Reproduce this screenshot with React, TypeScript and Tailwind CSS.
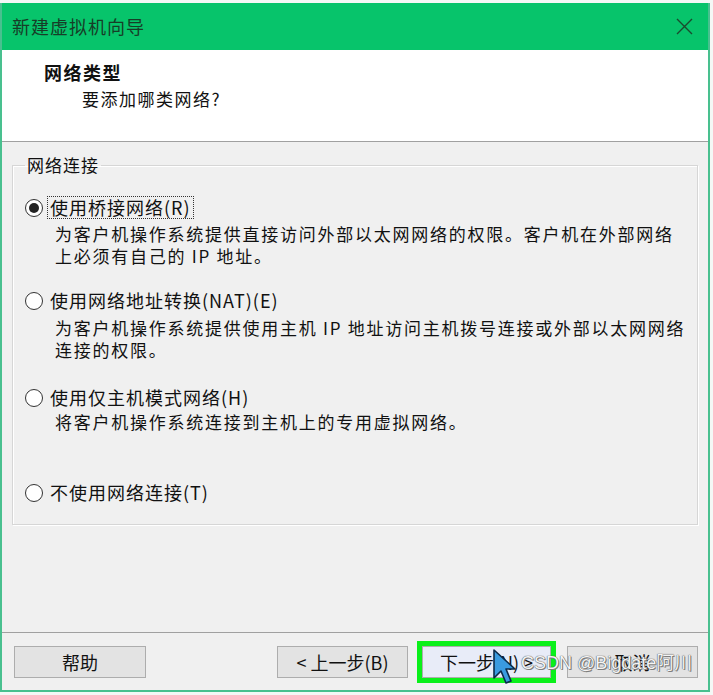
import React from 'react';

type Option = {
  label: string;
  desc: string[];
  checked?: boolean;
  focus?: boolean;
  rowClass: string;
  descClass: string;
};

const options: Option[] = [
  {
    label: '使用桥接网络(R)',
    desc: ['为客户机操作系统提供直接访问外部以太网网络的权限。客户机在外部网络', '上必须有自己的 IP 地址。'],
    checked: true,
    focus: true,
    rowClass: 'mt-[19px]',
    descClass: 'mt-[4px]',
  },
  {
    label: '使用网络地址转换(NAT)(E)',
    desc: ['为客户机操作系统提供使用主机 IP 地址访问主机拨号连接或外部以太网网络', '连接的权限。'],
    rowClass: 'mt-[22px]',
    descClass: 'mt-[5px]',
  },
  {
    label: '使用仅主机模式网络(H)',
    desc: ['将客户机操作系统连接到主机上的专用虚拟网络。'],
    rowClass: 'mt-[25px]',
    descClass: 'mt-[2px]',
  },
  {
    label: '不使用网络连接(T)',
    desc: [],
    rowClass: 'mt-[48px]',
    descClass: '',
  },
];

const Radio = ({ checked }: { checked?: boolean }) => (
  <span className="w-[18px] h-[18px] rounded-full border border-[#333] bg-white flex items-center justify-center shrink-0">
    {checked && <span className="w-[10px] h-[10px] rounded-full bg-[#222]" />}
  </span>
);

const Btn = ({ children, className = '' }: { children: React.ReactNode; className?: string }) => (
  <div
    className={`h-[32px] border border-[#adadad] bg-[#e3e3e3] flex items-center justify-center text-[18px] text-[#111] whitespace-nowrap ${className}`}
  >
    {children}
  </div>
);

export default function App() {
  return (
    <div
      className="w-[713px] h-[695px] bg-[#f4f8f6] relative overflow-hidden"
      style={{ fontFamily: '"Noto Sans CJK SC", "Noto Sans", sans-serif' }}
    >
      <div className="mt-[3px] mr-[3px] h-[689px] border-x-2 border-b-2 border-[#49c08f] flex flex-col bg-[#f0f0f0]">
        {/* title bar */}
        <div className="h-[47px] bg-[#07c46b] flex items-center justify-between pl-[10px] pr-[14px] shrink-0">
          <span className="text-[18px] text-[#173d27] tracking-[1px]">新建虚拟机向导</span>
          <svg width="17" height="17" viewBox="0 0 17 17" className="mr-[1px]">
            <path d="M1 1 L16 16 M16 1 L1 16" stroke="#1b4a2e" strokeWidth="1.4" />
          </svg>
        </div>

        {/* header */}
        <div className="h-[92px] bg-white border-b border-[#a0a0a0] shrink-0 pt-[10px]">
          <div className="pl-[42px] text-[18px] font-bold text-[#111] leading-[24px] tracking-[1.5px]">网络类型</div>
          <div className="pl-[80px] mt-[3px] text-[17px] text-[#111] leading-[24px] tracking-[1.5px]">要添加哪类网络?</div>
        </div>

        {/* body */}
        <div className="flex-1 px-[10px] pt-[11px]">
          <fieldset className="border border-[#d6d6d6] shadow-[inset_1px_1px_0_#ffffff,1px_1px_0_#ffffff] pl-[12px] pr-[10px] pb-[16px] h-[372px]">
            <legend className="px-[2px] text-[17px] leading-[24px] text-[#111] tracking-[1px]">网络连接</legend>
            {options.map((o) => (
              <div key={o.label}>
                <div className={`flex items-center h-[23px] ${o.rowClass}`}>
                  <Radio checked={o.checked} />
                  <span
                    className={`ml-[5px] px-[2px] text-[18px] leading-[21px] text-[#111] tracking-[1px] ${
                      o.focus ? 'outline outline-1 outline-dotted outline-[#333]' : ''
                    }`}
                  >
                    {o.label}
                  </span>
                </div>
                {o.desc.length > 0 && (
                  <div className={`pl-[30px] text-[17px] leading-[22px] text-[#111] tracking-[1.75px] ${o.descClass}`}>
                    {o.desc.map((d) => (
                      <div key={d} className="whitespace-nowrap">{d}</div>
                    ))}
                  </div>
                )}
              </div>
            ))}
          </fieldset>
        </div>

        {/* footer */}
        <div className="h-[58px] border-t border-[#a0a0a0] shrink-0 flex items-start pt-[13px] px-[10px]">
          <Btn className="w-[132px] ml-[2px]">帮助</Btn>
          <Btn className="w-[131px] ml-[131px]">&lt; 上一步(B)</Btn>
          <div className="ml-[9px] -mt-[5px] p-[5px] bg-[#0af01a]">
            <Btn className="w-[129px] bg-[#e8ecf8] border-[#8a8aa0]">下一步(N) &gt;</Btn>
          </div>
          <Btn className="w-[131px] ml-[11px]">取消</Btn>
        </div>
      </div>

      {/* mouse cursor */}
      <svg className="absolute left-[491px] top-[648px]" width="26" height="38" viewBox="0 0 26 38">
        <path d="M3 2 L3 30 L10 23 L15 35 L20 33 L15 21 L24 21 Z" fill="#3a9be0" stroke="#0c2b4a" strokeWidth="1.6" strokeLinejoin="round" />
      </svg>

      {/* watermark */}
      <div
        className="absolute left-[521px] top-[651px] text-[18px] leading-[24px] text-[#f4f4f4] whitespace-nowrap"
        style={{ fontFamily: '"Liberation Sans", "Noto Sans CJK SC", sans-serif', textShadow: '0 0 1px #555, 0 0 1px #555, 1px 1px 0 #888' }}
      >
        CSDN @Bigdate阿川
      </div>
    </div>
  );
}
